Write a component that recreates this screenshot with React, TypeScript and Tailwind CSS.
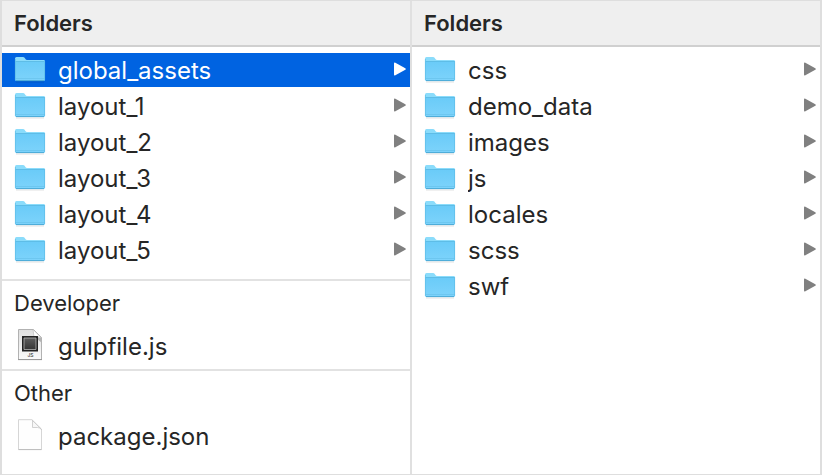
import { useId, useState } from "react";

type Kind = "folder" | "script" | "file";

interface Section {
  label: string;
  kind: Kind;
  items: string[];
}

const ROOT_SECTIONS: Section[] = [
  {
    label: "Folders",
    kind: "folder",
    items: ["global_assets", "layout_1", "layout_2", "layout_3", "layout_4", "layout_5"],
  },
  { label: "Developer", kind: "script", items: ["gulpfile.js"] },
  { label: "Other", kind: "file", items: ["package.json"] },
];

const ASSET_SECTIONS: Section[] = [
  {
    label: "Folders",
    kind: "folder",
    items: ["css", "demo_data", "images", "js", "locales", "scss", "swf"],
  },
];

export default function App() {
  const [selected, setSelected] = useState("global_assets");

  return (
    <main className="flex min-h-screen border-x-2 border-y border-[#dedede] bg-white font-[Inter,'Liberation_Sans',sans-serif] text-[#262626]">
      <Column sections={ROOT_SECTIONS} selected={selected} onSelect={setSelected} />
      <div className="w-0.5 shrink-0 bg-[#e0e0e0]" />
      <Column sections={ASSET_SECTIONS} selected={selected} onSelect={setSelected} />
    </main>
  );
}

function Column({
  sections,
  selected,
  onSelect,
}: {
  sections: Section[];
  selected: string;
  onSelect: (name: string) => void;
}) {
  return (
    <div className="min-w-0 flex-1">
      {sections.map((section, i) => (
        <section key={section.label}>
          {i === 0 ? (
            <h2 className="h-[46px] border-b-2 border-[#d0d0d0] bg-[#efefef] px-3 text-[22px] leading-[44px] font-semibold">
              {section.label}
            </h2>
          ) : (
            <h2 className="h-12 border-t-2 border-[#e2e2e2] px-3 text-[22px] leading-[44px]">
              {section.label}
            </h2>
          )}
          <ul className={i === 0 ? "space-y-0.5 pt-1.5 pb-3" : "pt-0.5 pb-1.5"}>
            {section.items.map((name) => (
              <li key={name}>
                <Row
                  name={name}
                  kind={section.kind}
                  active={name === selected}
                  onClick={() => onSelect(name)}
                />
              </li>
            ))}
          </ul>
        </section>
      ))}
    </div>
  );
}

function Row({
  name,
  kind,
  active,
  onClick,
}: {
  name: string;
  kind: Kind;
  active: boolean;
  onClick: () => void;
}) {
  return (
    <button
      type="button"
      onClick={onClick}
      className={`flex h-[34px] w-full items-center gap-3 pr-1 pl-3 text-left text-[24px] leading-[32px] ${
        active ? "bg-[#0063e1] text-white" : ""
      }`}
    >
      {kind === "folder" && <FolderIcon />}
      {kind === "script" && <ScriptIcon />}
      {kind === "file" && <FileIcon />}
      <span className="flex-1 truncate pt-0.5">{name}</span>
      {kind === "folder" && (
        <svg
          viewBox="0 0 13 16"
          className={`h-4 w-[13px] shrink-0 ${active ? "text-white" : "text-[#808080]"}`}
          aria-hidden="true"
        >
          <path
            d="M1 1.6Q1 -.1 2.400 .7L12.300 6.200Q13.400 7 12.300 7.800L2.400 13.300Q1 14.100 1 12.400Z"
            fill="currentColor"
          />
        </svg>
      )}
    </button>
  );
}

function FolderIcon() {
  const id = useId();

  return (
    <svg viewBox="0 0 32 32" className="size-8 shrink-0" aria-hidden="true">
      <defs>
        <linearGradient id={id} x1="0" y1="0" x2="0" y2="1">
          <stop offset="0" stopColor="#6acbf8" />
          <stop offset="1" stopColor="#7dd3fb" />
        </linearGradient>
      </defs>
      <path d="M2 27.5h28v1H2z" fill="#000" opacity=".12" />
      <path
        d="M1 4.6Q1 3 2.5 3H9q1 0 1.600.8l1 1.400q.5.7 1.400.7h16.600Q31 5.900 31 7.300V12H1Z"
        fill="#8bdcfb"
      />
      <path d="M1 7.500h30V25.500Q31 27 29.500 27H2.500Q1 27 1 25.500Z" fill={`url(#${id})`} />
      <path d="M1.500 7.500h29" stroke="#57b7e2" strokeWidth=".8" />
      <path d="M1.500 24.500h29" stroke="#65bfe9" strokeWidth=".6" />
      <path d="M1.400 5V26M30.600 7V26" stroke="#5dbbe5" strokeWidth=".7" />
      <path d="M2 26.600h28" stroke="#4ba9d6" />
    </svg>
  );
}

function ScriptIcon() {
  const id = useId();

  return (
    <svg viewBox="0 0 32 34" className="h-[34px] w-8 shrink-0" aria-hidden="true">
      <defs>
        <linearGradient id={`${id}p`} x1="0" y1="0" x2="0" y2="1">
          <stop offset="0" stopColor="#dedede" />
          <stop offset="1" stopColor="#fafafa" />
        </linearGradient>
        <linearGradient id={`${id}s`} x1="0" y1="0" x2="0" y2="1">
          <stop offset="0" stopColor="#5d5d5d" />
          <stop offset="1" stopColor="#353535" />
        </linearGradient>
      </defs>
      <path
        d="M4.500 .5H19.500L27.500 8.500V30.500H4.500Z"
        fill={`url(#${id}p)`}
        stroke="#b2b2b2"
      />
      <path d="M4 30.600h24" stroke="#969696" />
      <path d="M19.500 7.500L27.500 9V13.500Z" fill="#b4b4b4" />
      <path d="M19 .5L27.500 9L26 8.200Q23 7.500 20 7.500Q19.500 4 19 .5Z" fill="#fff" stroke="#b5b5b5" strokeWidth=".6" />
      <path d="M8 7h16v15.500H8z" fill="#222" />
      <path d="M10 9h12v11.500H10z" fill={`url(#${id}s)`} stroke="#b5b5b5" strokeWidth=".8" />
      <text x="16.500" y="28" textAnchor="middle" fontSize="5" fontWeight="500" fill="#333">
        JS
      </text>
    </svg>
  );
}

function FileIcon() {
  return (
    <svg viewBox="0 0 32 34" className="h-[34px] w-8 shrink-0" aria-hidden="true">
      <path d="M4.500 .7H18L27.500 10V30.500H4.500Z" fill="#fefefe" stroke="#d6d6d6" strokeLinejoin="round" />
      <path d="M4.500 30.600h23" stroke="#bdbdbd" />
      <path
        d="M18 1L27.500 10.500Q25.500 8.500 23.500 8.500H18.500V1.500"
        fill="#f7f7f7"
        stroke="#c6c6c6"
        strokeWidth=".8"
      />
    </svg>
  );
}
